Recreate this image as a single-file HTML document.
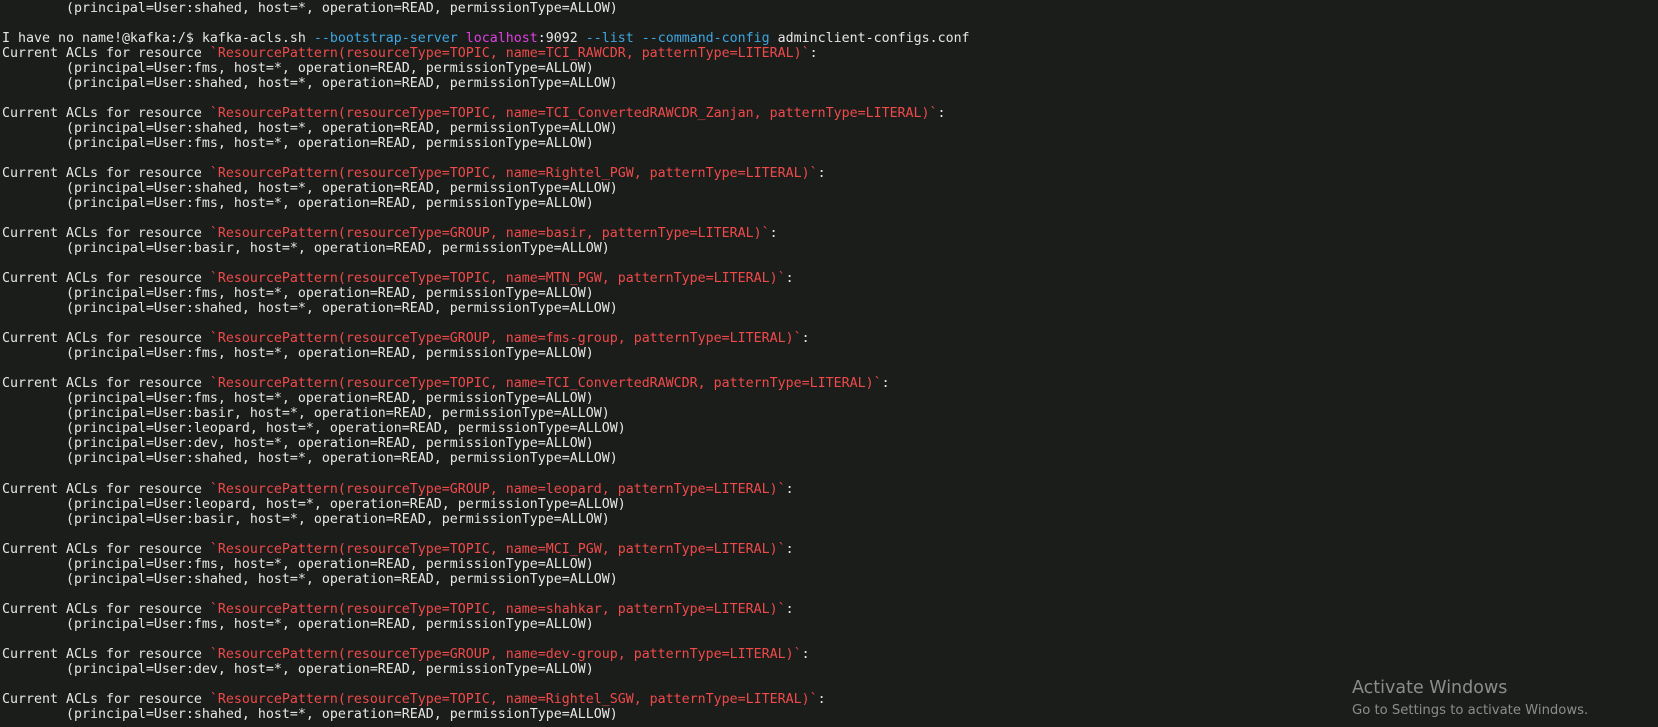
<!DOCTYPE html>
<html><head><meta charset="utf-8"><style>
html,body{margin:0;padding:0;background:#1b1d1b;width:1658px;height:727px;overflow:hidden}
pre{margin:0;padding:1px 0 0 2px;font-family:"DejaVu Sans Mono","Liberation Mono",monospace;font-size:13.29px;line-height:15.02px;color:#e6e6e6;white-space:pre}
.r{color:#ef4a4a}.c{color:#3ea6e0}.m{color:#e040e0}
.act{position:absolute;left:1352px;top:678px;font-family:"DejaVu Sans","Liberation Sans",sans-serif;color:#8b8d8b}
.act .a{font-size:17.5px}.act .b{font-size:13.2px;margin-top:5px}
</style></head><body><pre>        (principal=User:shahed, host=*, operation=READ, permissionType=ALLOW)

I have no name!@kafka:/$ kafka-acls.sh <span class="c">--bootstrap-server</span> <span class="m">localhost</span>:9092 <span class="c">--list</span> <span class="c">--command-config</span> adminclient-configs.conf
Current ACLs for resource <span class="r">`ResourcePattern(resourceType=TOPIC, name=TCI_RAWCDR, patternType=LITERAL)`</span>:
        (principal=User:fms, host=*, operation=READ, permissionType=ALLOW)
        (principal=User:shahed, host=*, operation=READ, permissionType=ALLOW)

Current ACLs for resource <span class="r">`ResourcePattern(resourceType=TOPIC, name=TCI_ConvertedRAWCDR_Zanjan, patternType=LITERAL)`</span>:
        (principal=User:shahed, host=*, operation=READ, permissionType=ALLOW)
        (principal=User:fms, host=*, operation=READ, permissionType=ALLOW)

Current ACLs for resource <span class="r">`ResourcePattern(resourceType=TOPIC, name=Rightel_PGW, patternType=LITERAL)`</span>:
        (principal=User:shahed, host=*, operation=READ, permissionType=ALLOW)
        (principal=User:fms, host=*, operation=READ, permissionType=ALLOW)

Current ACLs for resource <span class="r">`ResourcePattern(resourceType=GROUP, name=basir, patternType=LITERAL)`</span>:
        (principal=User:basir, host=*, operation=READ, permissionType=ALLOW)

Current ACLs for resource <span class="r">`ResourcePattern(resourceType=TOPIC, name=MTN_PGW, patternType=LITERAL)`</span>:
        (principal=User:fms, host=*, operation=READ, permissionType=ALLOW)
        (principal=User:shahed, host=*, operation=READ, permissionType=ALLOW)

Current ACLs for resource <span class="r">`ResourcePattern(resourceType=GROUP, name=fms-group, patternType=LITERAL)`</span>:
        (principal=User:fms, host=*, operation=READ, permissionType=ALLOW)

Current ACLs for resource <span class="r">`ResourcePattern(resourceType=TOPIC, name=TCI_ConvertedRAWCDR, patternType=LITERAL)`</span>:
        (principal=User:fms, host=*, operation=READ, permissionType=ALLOW)
        (principal=User:basir, host=*, operation=READ, permissionType=ALLOW)
        (principal=User:leopard, host=*, operation=READ, permissionType=ALLOW)
        (principal=User:dev, host=*, operation=READ, permissionType=ALLOW)
        (principal=User:shahed, host=*, operation=READ, permissionType=ALLOW)

Current ACLs for resource <span class="r">`ResourcePattern(resourceType=GROUP, name=leopard, patternType=LITERAL)`</span>:
        (principal=User:leopard, host=*, operation=READ, permissionType=ALLOW)
        (principal=User:basir, host=*, operation=READ, permissionType=ALLOW)

Current ACLs for resource <span class="r">`ResourcePattern(resourceType=TOPIC, name=MCI_PGW, patternType=LITERAL)`</span>:
        (principal=User:fms, host=*, operation=READ, permissionType=ALLOW)
        (principal=User:shahed, host=*, operation=READ, permissionType=ALLOW)

Current ACLs for resource <span class="r">`ResourcePattern(resourceType=TOPIC, name=shahkar, patternType=LITERAL)`</span>:
        (principal=User:fms, host=*, operation=READ, permissionType=ALLOW)

Current ACLs for resource <span class="r">`ResourcePattern(resourceType=GROUP, name=dev-group, patternType=LITERAL)`</span>:
        (principal=User:dev, host=*, operation=READ, permissionType=ALLOW)

Current ACLs for resource <span class="r">`ResourcePattern(resourceType=TOPIC, name=Rightel_SGW, patternType=LITERAL)`</span>:
        (principal=User:shahed, host=*, operation=READ, permissionType=ALLOW)</pre>
<div class="act"><div class="a">Activate Windows</div><div class="b">Go to Settings to activate Windows.</div></div>
</body></html>
